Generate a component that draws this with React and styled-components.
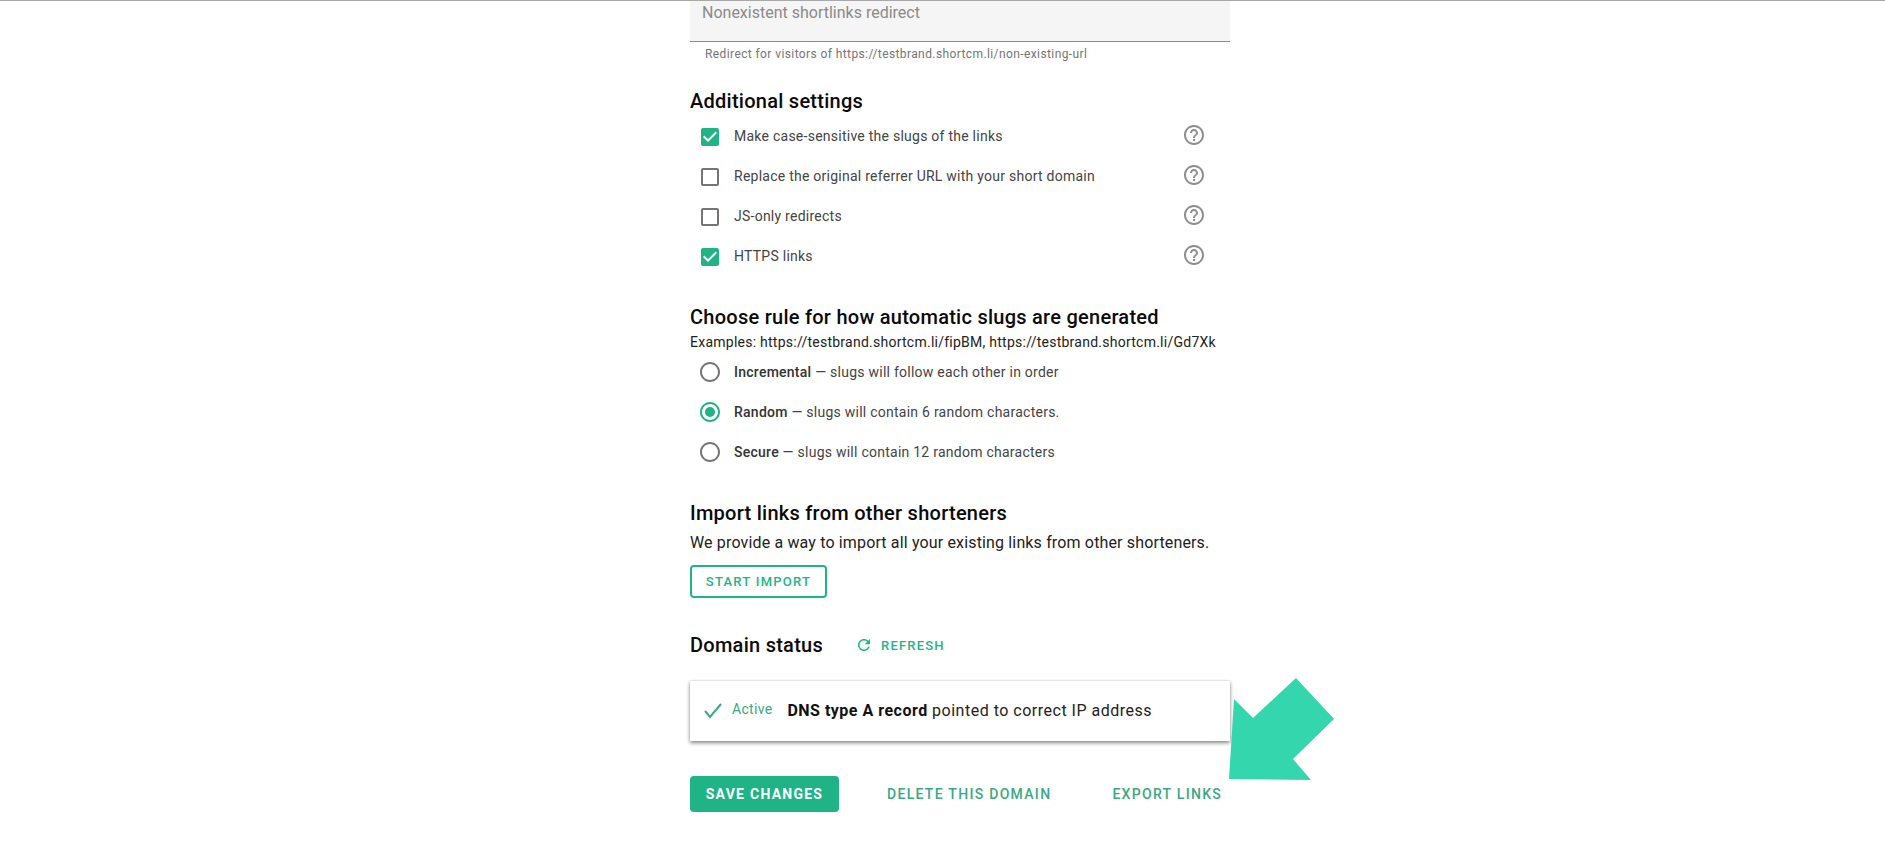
import React from 'react'
import styled, { createGlobalStyle } from 'styled-components'

const GREEN = '#1fb386'

const Global = createGlobalStyle`
  html, body { margin: 0; padding: 0; background: #fff; overflow: hidden; }
  body { font-family: Roboto, "Liberation Sans", sans-serif; }
`

const Page = styled.div`
  position: relative;
  height: 853px;
  border-top: 1px solid #a8a8a8;
  box-sizing: border-box;
  overflow: hidden;
`

const Column = styled.div`
  width: 540px;
  margin-left: 690px;
`

const FakeInput = styled.div`
  height: 41px;
  padding: 2px 12px 0;
  box-sizing: border-box;
  background: #f5f5f5;
  border-bottom: 1px solid #8c8c8c;
  color: #8a8a8a;
  font-size: 16px;
  line-height: 19px;
`

const Helper = styled.div`
  margin: 5px 0 0 15px;
  font-size: 12px;
  line-height: 14px;
  letter-spacing: 0.4px;
  color: #757575;
`

const Heading = styled.h3`
  margin: ${p => p.$top}px 0 0;
  font-size: 20px;
  line-height: 24px;
  font-weight: 500;
  letter-spacing: 0.26px;
  color: #0a0a0a;
`

const Examples = styled.p`
  margin: 4px 0 0;
  font-size: 14px;
  line-height: 19px;
  letter-spacing: 0.25px;
  color: #222;
`

const Lead = styled.p`
  margin: 6px 0 0;
  font-size: 16px;
  line-height: 24px;
  letter-spacing: 0.15px;
  color: #222;
`

const OptionList = styled.div`
  display: flex;
  flex-direction: column;
  margin-top: ${p => p.$top}px;
`

const Option = styled.div`
  display: flex;
  align-items: center;
  height: 40px;
  padding-left: 8px;
`

const Control = styled.svg`
  width: 24px;
  height: 24px;
  flex: none;
  margin-top: ${p => (p.$square ? 1 : 0)}px;
  fill: ${p => (p.$on ? GREEN : '#757575')};
`

const Label = styled.span`
  margin-left: 12px;
  flex: 1;
  font-size: 14px;
  letter-spacing: 0.25px;
  color: #444;
  b { font-weight: 500; color: #333; }
`

const Help = styled.svg`
  width: 24px;
  height: 24px;
  margin: -2px 24px 0 0;
  flex: none;
  fill: #8e8e8e;
`

const OutlineButton = styled.button`
  display: block;
  width: 137px;
  height: 33px;
  margin-top: 10px;
  padding: 0;
  background: #fff;
  border: 2px solid ${GREEN};
  border-radius: 4px;
  color: ${GREEN};
  font: 500 13px Roboto, sans-serif;
  letter-spacing: 1.25px;
`

const StatusHead = styled.div`
  display: flex;
  align-items: center;
  margin-top: 35px;
  height: 24px;
`

const StatusTitle = styled(Heading)`
  margin: 0;
`

const Refresh = styled.span`
  display: flex;
  align-items: center;
  margin-left: 32px;
  color: ${GREEN};
  font-size: 13px;
  font-weight: 500;
  letter-spacing: 1.2px;
  svg { width: 18px; height: 18px; fill: ${GREEN}; margin-right: 8px; }
`

const Card = styled.div`
  display: flex;
  align-items: center;
  height: 60px;
  margin-top: 24px;
  padding: 0 0 2px 12px;
  box-sizing: border-box;
  background: #fff;
  box-shadow: 0 2px 4px rgba(0, 0, 0, 0.45), 0 0 2px rgba(0, 0, 0, 0.15);
`

const Active = styled.span`
  margin: -3px 15px 0 8px;
  color: #3aa886;
  font-size: 14px;
  letter-spacing: 0.3px;
`

const StatusText = styled.span`
  font-size: 16px;
  letter-spacing: 0.5px;
  color: #222;
  b { font-weight: 700; color: #111; }
`

const Actions = styled.div`
  display: flex;
  align-items: center;
  margin-top: 35px;
`

const SaveButton = styled.button`
  width: 149px;
  height: 36px;
  padding: 0;
  background: ${GREEN};
  border: 0;
  border-radius: 4px;
  color: #fff;
  font: 700 14px Roboto, sans-serif;
  letter-spacing: 1.25px;
`

const TextButton = styled.span`
  margin-left: ${p => p.$left}px;
  color: #3aa886;
  font-size: 14px;
  font-weight: 500;
  letter-spacing: 1.3px;
`

const Arrow = styled.svg`
  position: absolute;
  left: 1225px;
  top: 670px;
  width: 115px;
  height: 115px;
  fill: #33d6ad;
`

const BoxIcon = ({ on }) => (
  <Control $on={on} $square viewBox="0 0 24 24">
    {on ? (
      <path d="M19 3H5c-1.11 0-2 .9-2 2v14c0 1.1.89 2 2 2h14c1.11 0 2-.9 2-2V5c0-1.1-.89-2-2-2zm-9 14l-5-5 1.41-1.41L10 14.17l7.59-7.59L19 8l-9 9z" />
    ) : (
      <path d="M19 5v14H5V5h14m0-2H5c-1.1 0-2 .9-2 2v14c0 1.1.9 2 2 2h14c1.1 0 2-.9 2-2V5c0-1.1-.9-2-2-2z" />
    )}
  </Control>
)

const RadioIcon = ({ on }) => (
  <Control $on={on} viewBox="0 0 24 24">
    <path d="M12 2C6.48 2 2 6.48 2 12s4.48 10 10 10 10-4.48 10-10S17.52 2 12 2zm0 18c-4.42 0-8-3.58-8-8s3.58-8 8-8 8 3.58 8 8-3.58 8-8 8z" />
    {on && <circle cx="12" cy="12" r="5" />}
  </Control>
)

const HelpIcon = () => (
  <Help viewBox="0 0 24 24">
    <path d="M11 18h2v-2h-2v2zm1-16C6.48 2 2 6.48 2 12s4.48 10 10 10 10-4.48 10-10S17.52 2 12 2zm0 18c-4.41 0-8-3.59-8-8s3.59-8 8-8 8 3.59 8 8-3.59 8-8 8zm0-14c-2.21 0-4 1.79-4 4h2c0-1.1.9-2 2-2s2 .9 2 2c0 2-3 1.75-3 5h2c0-2.25 3-2.5 3-5 0-2.21-1.79-4-4-4z" />
  </Help>
)

const settings = [
  ['Make case-sensitive the slugs of the links', true],
  ['Replace the original referrer URL with your short domain', false],
  ['JS-only redirects', false],
  ['HTTPS links', true],
]

const rules = [
  ['Incremental', 'slugs will follow each other in order', false],
  ['Random', 'slugs will contain 6 random characters.', true],
  ['Secure', 'slugs will contain 12 random characters', false],
]

const App = () => {
  return (
    <Page>
      <Global />
      <Column>
        <FakeInput>Nonexistent shortlinks redirect</FakeInput>
        <Helper>Redirect for visitors of https://testbrand.shortcm.li/non-existing-url</Helper>

        <Heading $top={28}>Additional settings</Heading>
        <OptionList $top={3}>
          {settings.map(([text, on]) => (
            <Option key={text}>
              <BoxIcon on={on} />
              <Label>{text}</Label>
              <HelpIcon />
            </Option>
          ))}
        </OptionList>

        <Heading $top={29}>Choose rule for how automatic slugs are generated</Heading>
        <Examples>Examples: https://testbrand.shortcm.li/fipBM, https://testbrand.shortcm.li/Gd7Xk</Examples>
        <OptionList $top={0}>
          {rules.map(([name, text, on]) => (
            <Option key={name}>
              <RadioIcon on={on} />
              <Label><b>{name}</b> — {text}</Label>
            </Option>
          ))}
        </OptionList>

        <Heading $top={29}>Import links from other shorteners</Heading>
        <Lead>We provide a way to import all your existing links from other shorteners.</Lead>
        <OutlineButton>START IMPORT</OutlineButton>

        <StatusHead>
          <StatusTitle>Domain status</StatusTitle>
          <Refresh>
            <svg viewBox="0 0 24 24"><path d="M17.65 6.35C16.2 4.9 14.21 4 12 4c-4.42 0-7.99 3.58-7.99 8s3.57 8 7.99 8c3.73 0 6.84-2.55 7.73-6h-2.08c-.82 2.33-3.04 4-5.65 4-3.31 0-6-2.69-6-6s2.69-6 6-6c1.66 0 3.14.69 4.22 1.78L13 11h7V4l-2.35 2.35z" /></svg>
            REFRESH
          </Refresh>
        </StatusHead>

        <Card>
          <svg width="22" height="22" viewBox="0 0 22 22" fill="none" stroke="#3aa886" strokeWidth="2">
            <path d="M3 12l5 6L19 5" />
          </svg>
          <Active>Active</Active>
          <StatusText><b>DNS type A record</b> pointed to correct IP address</StatusText>
        </Card>

        <Actions>
          <SaveButton>SAVE CHANGES</SaveButton>
          <TextButton $left={48}>DELETE THIS DOMAIN</TextButton>
          <TextButton $left={61}>EXPORT LINKS</TextButton>
        </Actions>
      </Column>

      <Arrow viewBox="1225 670 115 115">
        <polygon points="1296,677 1334,718 1293,758 1311,779 1229,778 1234,698 1253,717" />
      </Arrow>
    </Page>
  )
}

export default App
